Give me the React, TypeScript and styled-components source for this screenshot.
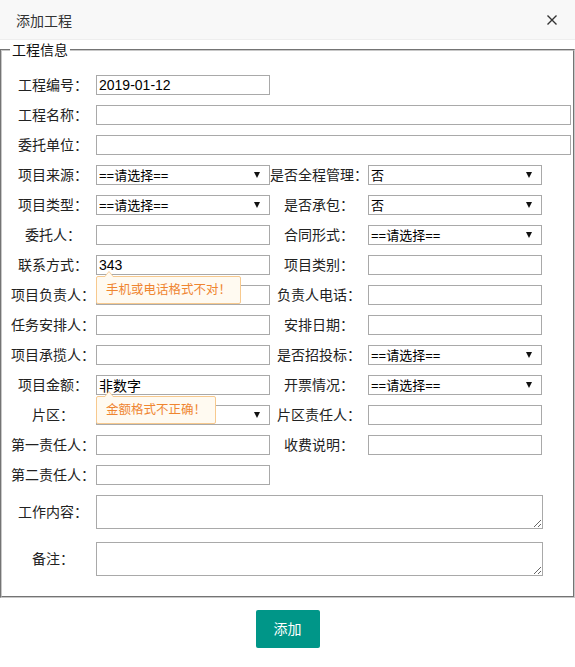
import React from "react";
import styled, { createGlobalStyle } from "styled-components";

const GlobalStyle = createGlobalStyle`
  html, body {
    margin: 0;
    padding: 0;
    background: #ffffff;
  }
  body {
    font-family: "Liberation Sans", "Noto Sans CJK SC", sans-serif;
    color: #333;
  }
`;

const Page = styled.div`
  width: 575px;
  min-height: 667px;
  background: #fff;
`;

const TitleBar = styled.div`
  display: flex;
  align-items: center;
  justify-content: space-between;
  height: 39px;
  padding: 0 18px 0 16px;
  background: #f8f8f8;
  border-bottom: 1px solid #eeeeee;
  font-size: 14px;
  color: #333;
`;

const CloseButton = styled.span`
  display: flex;
  width: 10px;
  height: 10px;
  cursor: pointer;
`;

const FieldSet = styled.fieldset`
  margin: 0;
  padding: 15px 8px 20px 8px;
  border: 2px groove #c8c8c8;
  width: 575px;
  box-sizing: border-box;
`;

const Legend = styled.legend`
  padding: 0 2px;
  font-size: 14px;
  line-height: 20px;
  color: #111;
`;

const FormGrid = styled.div`
  display: grid;
  grid-template-columns: 86px 174px 98px 174px;
  row-gap: 10px;
  align-items: center;
`;

const Label = styled.label<{ $offset?: number }>`
  font-size: 14px;
  line-height: 20px;
  color: #222;
  text-align: center;
  white-space: nowrap;
  margin-top: ${({ $offset }) => $offset || 0}px;
`;

const Cell = styled.div<{ $span?: number }>`
  position: relative;
  display: flex;
  grid-column: span ${({ $span }) => $span || 1};
`;

const TextInput = styled.input<{ $width?: number }>`
  box-sizing: border-box;
  flex-shrink: 0;
  width: ${({ $width }) => ($width ? `${$width}px` : "100%")};
  height: 20px;
  margin: 0;
  padding: 0 2px;
  border: 1px solid #a9a9a9;
  border-radius: 0;
  font-family: "Liberation Sans", "Noto Sans CJK SC", sans-serif;
  font-size: 14px;
  color: #000;
  background: #fff;
  outline: none;
`;

const SelectBox = styled.div`
  position: relative;
  width: 100%;
  height: 20px;

  &::after {
    content: "";
    position: absolute;
    right: 10px;
    top: 7px;
    border-left: 3px solid transparent;
    border-right: 3px solid transparent;
    border-top: 6px solid #111;
    pointer-events: none;
  }
`;

const Select = styled.select`
  appearance: none;
  box-sizing: border-box;
  width: 100%;
  height: 20px;
  margin: 0;
  padding: 0 2px;
  border: 1px solid #a9a9a9;
  border-radius: 0;
  background: #fff;
  font-family: "Liberation Sans", "Noto Sans CJK SC", sans-serif;
  font-size: 13px;
  color: #000;
  outline: none;
`;

const TextArea = styled.textarea<{ $offset?: number }>`
  box-sizing: border-box;
  flex-shrink: 0;
  width: 447px;
  height: 34px;
  margin: ${({ $offset }) => $offset || 0}px 0 0 0;
  padding: 2px;
  border: 1px solid #a9a9a9;
  border-radius: 0;
  font-family: "Liberation Sans", "Noto Sans CJK SC", sans-serif;
  font-size: 14px;
  outline: none;
`;

const Tip = styled.div`
  position: absolute;
  left: 0;
  top: 21px;
  z-index: 2;
  padding: 4px 9px;
  border: 1px solid #f7c98e;
  border-radius: 2px;
  background: #fffaf1;
  color: #ef8530;
  font-size: 12.5px;
  line-height: 18px;
  white-space: nowrap;

  &::before,
  &::after {
    content: "";
    position: absolute;
    left: 7px;
    border-left: 5px solid transparent;
    border-right: 5px solid transparent;
  }
  &::before {
    top: -6px;
    border-bottom: 6px solid #f7c98e;
  }
  &::after {
    top: -5px;
    border-bottom: 6px solid #fffaf1;
  }
`;

const Footer = styled.div`
  display: flex;
  justify-content: center;
  padding-top: 12px;
`;

const PrimaryButton = styled.button`
  height: 38px;
  padding: 0 18px;
  border: none;
  border-radius: 2px;
  background: #009688;
  color: #fff;
  font-family: "Liberation Sans", "Noto Sans CJK SC", sans-serif;
  font-size: 14px;
  line-height: 38px;
  cursor: pointer;
`;

type Field =
  | { kind: "input"; value?: string; tip?: string }
  | { kind: "select"; value: string };

const Control = ({ field }: { field: Field }) => {
  if (field.kind === "select") {
    return (
      <SelectBox>
        <Select defaultValue={field.value}>
          <option value={field.value}>{field.value}</option>
        </Select>
      </SelectBox>
    );
  }
  return (
    <>
      <TextInput defaultValue={field.value || ""} />
      {field.tip && <Tip>{field.tip}</Tip>}
    </>
  );
};

const pairs: [string, Field, string?, Field?][] = [
  ["项目来源：", { kind: "select", value: "==请选择==" }, "是否全程管理：", { kind: "select", value: "否" }],
  ["项目类型：", { kind: "select", value: "==请选择==" }, "是否承包：", { kind: "select", value: "否" }],
  ["委托人：", { kind: "input" }, "合同形式：", { kind: "select", value: "==请选择==" }],
  ["联系方式：", { kind: "input", value: "343", tip: "手机或电话格式不对！" }, "项目类别：", { kind: "input" }],
  ["项目负责人：", { kind: "input" }, "负责人电话：", { kind: "input" }],
  ["任务安排人：", { kind: "input" }, "安排日期：", { kind: "input" }],
  ["项目承揽人：", { kind: "input" }, "是否招投标：", { kind: "select", value: "==请选择==" }],
  ["项目金额：", { kind: "input", value: "非数字", tip: "金额格式不正确！" }, "开票情况：", { kind: "select", value: "==请选择==" }],
  ["片区：", { kind: "select", value: "" }, "片区责任人：", { kind: "input" }],
  ["第一责任人：", { kind: "input" }, "收费说明：", { kind: "input" }],
  ["第二责任人：", { kind: "input" }],
];

const App = () => {
  return (
    <Page>
      <GlobalStyle />
      <TitleBar>
        <span>添加工程</span>
        <CloseButton>
          <svg width="10" height="10" viewBox="0 0 10 10">
            <path d="M0.5 0.5 L9.5 9.5 M9.5 0.5 L0.5 9.5" stroke="#333" strokeWidth="1.4" fill="none" />
          </svg>
        </CloseButton>
      </TitleBar>
      <FieldSet>
        <Legend>工程信息</Legend>
        <FormGrid>
          <Label>工程编号：</Label>
          <Cell $span={3}>
            <TextInput $width={174} defaultValue="2019-01-12" />
          </Cell>
          <Label>工程名称：</Label>
          <Cell $span={3}>
            <TextInput $width={475} />
          </Cell>
          <Label>委托单位：</Label>
          <Cell $span={3}>
            <TextInput $width={475} />
          </Cell>
          {pairs.map(([l1, f1, l2, f2]) => (
            <React.Fragment key={l1}>
              <Label>{l1}</Label>
              <Cell>
                <Control field={f1} />
              </Cell>
              {l2 && f2 ? (
                <>
                  <Label>{l2}</Label>
                  <Cell>
                    <Control field={f2} />
                  </Cell>
                </>
              ) : (
                <Cell $span={2} />
              )}
            </React.Fragment>
          ))}
          <Label>工作内容：</Label>
          <Cell $span={3}>
            <TextArea />
          </Cell>
          <Label $offset={3}>备注：</Label>
          <Cell $span={3}>
            <TextArea $offset={3} />
          </Cell>
        </FormGrid>
      </FieldSet>
      <Footer>
        <PrimaryButton>添加</PrimaryButton>
      </Footer>
    </Page>
  );
};

export default App;
